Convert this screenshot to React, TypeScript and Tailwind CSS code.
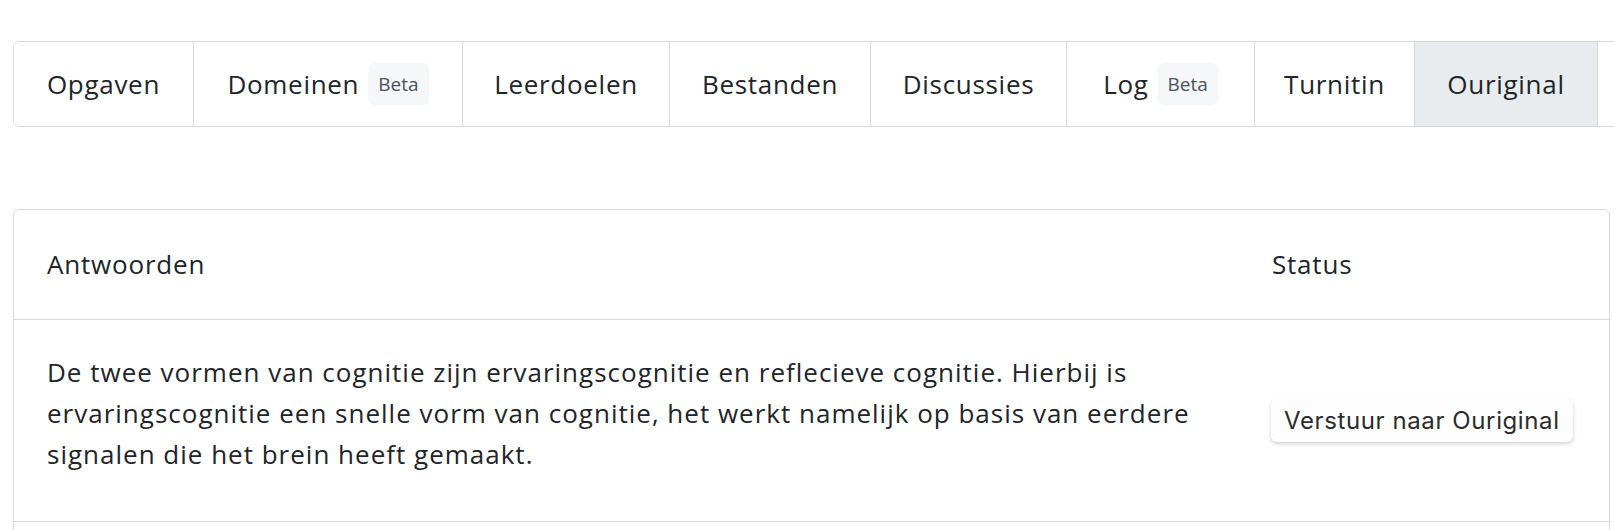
import React from 'react';

const tabs = [
  { label: 'Opgaven', width: 'w-[180px]' },
  { label: 'Domeinen', width: 'w-[269px]', beta: true },
  { label: 'Leerdoelen', width: 'w-[207px]' },
  { label: 'Bestanden', width: 'w-[201px]' },
  { label: 'Discussies', width: 'w-[196px]' },
  { label: 'Log', width: 'w-[188px]', beta: true },
  { label: 'Turnitin', width: 'w-[160px]' },
  { label: 'Ouriginal', width: 'w-[183px]', active: true },
];

function Tabs() {
  return (
    <div className="ml-[13px] flex w-max border border-[#d5d9de] rounded-l-[6px] overflow-hidden">
      {tabs.map((tab) => (
        <div
          key={tab.label}
          className={`${tab.width} h-[84px] shrink-0 flex items-center justify-center gap-[9px] border-r border-[#d5d9de] text-[26px] tracking-[0.7px] text-[#212529] ${
            tab.active ? 'bg-[#e9ecef]' : 'bg-white'
          }`}
        >
          <span>{tab.label}</span>
          {tab.beta && (
            <span className="h-[42px] px-[10px] flex items-center rounded-[6px] bg-[#f6f7f9] text-[19px] tracking-normal text-[#4b5259]">
              Beta
            </span>
          )}
        </div>
      ))}
      {/* next tab, cut off by the window edge */}
      <div className="w-[60px] h-[84px] shrink-0 bg-white" />
    </div>
  );
}

function AnswersTable() {
  return (
    <div className="mt-[82px] ml-[13px] w-[1597px] border border-[#d5d9de] rounded-t-[6px] text-[#212529]">
      <div className="grid grid-cols-[1225px_1fr] h-[110px] items-center border-b border-[#d5d9de] text-[26px] tracking-[0.8px]">
        <div className="px-[33px]">Antwoorden</div>
        <div className="px-[33px]">Status</div>
      </div>
      <div className="grid grid-cols-[1225px_1fr] h-[202px] items-center border-b border-[#d5d9de]">
        <p className="px-[33px] pb-[14px] text-[26px] tracking-[1px] leading-[41px]">
          De twee vormen van cognitie zijn ervaringscognitie en reflecieve cognitie. Hierbij is
          ervaringscognitie een snelle vorm van cognitie, het werkt namelijk op basis van eerdere
          signalen die het brein heeft gemaakt.
        </p>
        <div className="px-[32px]">
          <button className="h-[43px] px-[13px] rounded-[6px] bg-[#fdfdfd] shadow-[0_2px_4px_rgba(0,0,0,0.18)] text-[24px] text-[#2b2b2b] font-['Inter',sans-serif] tracking-[0.6px] whitespace-nowrap">
            Verstuur naar Ouriginal
          </button>
        </div>
      </div>
      <div className="h-[60px]" />
    </div>
  );
}

export default function App() {
  return (
    <div className="h-screen overflow-hidden bg-white pt-[41px] font-['Open_Sans',sans-serif]">
      <Tabs />
      <AnswersTable />
    </div>
  );
}
